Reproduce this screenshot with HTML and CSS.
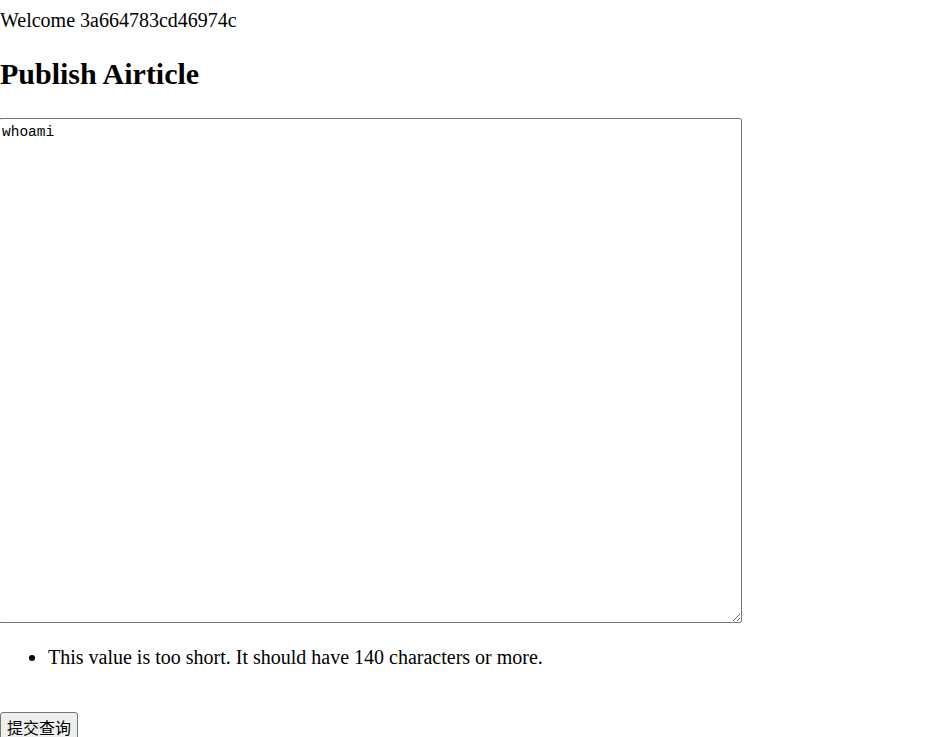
FILE: index.html
```html
<!DOCTYPE html>
<html>
<head>
<meta charset="utf-8">
<link rel="stylesheet" href="styles.css">
</head>
<body>
<p class="welcome">Welcome 3a664783cd46974c</p>
<h1 class="title">Publish Airticle</h1>
<form class="form">
<textarea class="editor">whoami</textarea>
<ul class="errors"><li>This value is too short. It should have 140 characters or more.</li></ul>
<button class="submit" type="button">提交查询</button>
</form>
</body>
</html>
```
FILE: styles.css
```css
html, body {
  margin: 0;
  padding: 0;
  background: #fff;
  overflow: hidden;
}
body {
  font-family: "Liberation Serif", "Noto Sans CJK SC", serif;
  font-size: 20px;
  color: #000;
}
.welcome {
  margin: 0;
  padding-top: 9px;
  line-height: 23px;
}
.title {
  margin: 25px 0 0;
  font-size: 30px;
  font-weight: bold;
  line-height: 34px;
}
.form {
  margin: 0;
}
.editor {
  display: block;
  box-sizing: border-box;
  margin: 27px 0 0 -1px;
  width: 743px;
  height: 505px;
  border: 1px solid #767676;
  border-radius: 2px;
  padding: 5px 2px 2px;
  font-family: "Liberation Mono", monospace;
  font-size: 14.5px;
  line-height: 17px;
  color: #000;
  resize: both;
  outline: none;
}
.errors {
  margin: 23px 0 0 0;
  padding-left: 48px;
  line-height: 23px;
}
.submit {
  display: block;
  margin: 43px 0 0 0;
  box-sizing: border-box;
  height: 30px;
  padding: 1px 6px;
  font-family: "Noto Sans CJK SC", sans-serif;
  font-size: 16px;
  line-height: 24px;
  border: 1px solid #767676;
  border-radius: 3px;
  background: #efefef;
  color: #000;
}
```
